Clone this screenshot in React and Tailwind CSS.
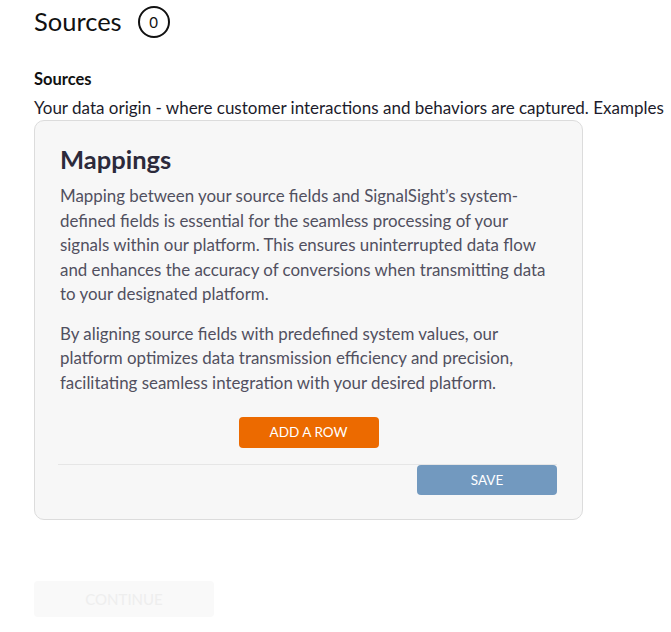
export default function App() {
  const para1 = [
    "Mapping between your source fields and SignalSight’s system-",
    "defined fields is essential for the seamless processing of your",
    "signals within our platform. This ensures uninterrupted data flow",
    "and enhances the accuracy of conversions when transmitting data",
    "to your designated platform.",
  ];
  const para2 = [
    "By aligning source fields with predefined system values, our",
    "platform optimizes data transmission efficiency and precision,",
    "facilitating seamless integration with your desired platform.",
  ];

  return (
    <div className="min-h-screen bg-white overflow-hidden font-['Lato','Noto_Sans',sans-serif] text-[#1c1b2b]">
      <div className="pl-[34px] pt-[6px]">
        {/* ── Header ── */}
        <div className="flex items-center gap-4 h-[32px]">
          <h1 className="text-[25.5px] leading-none text-[#111]">Sources</h1>
          <span className="w-[32px] h-[32px] rounded-full border-2 border-[#111] flex items-center justify-center text-[15px] text-[#111]">
            0
          </span>
        </div>

        <h2 className="mt-[31px] text-[16.5px] font-bold leading-5 text-[#111]">Sources</h2>
        <p className="mt-[9px] text-[17px] leading-5 whitespace-nowrap text-[#1c1b2b]">
          Your data origin - where customer interactions and behaviors are captured. Examples
        </p>

        {/* ── Mappings card ── */}
        <div className="mt-[2px] w-[549px] h-[400px] rounded-[10px] border border-[#dcdcdc] bg-[#f7f7f7] px-[25px] pt-[24px] flex flex-col">
          <h3 className="text-[25.5px] font-bold leading-7 text-[#2c2a3b]">Mappings</h3>
          <p className="mt-[11px] text-[16.9px] leading-[24.5px] text-[#51505f]">
            {para1.map((l) => (
              <span key={l} className="block whitespace-nowrap">{l}</span>
            ))}
          </p>
          <p className="mt-[15px] text-[16.9px] leading-[24.5px] text-[#51505f]">
            {para2.map((l) => (
              <span key={l} className="block whitespace-nowrap">{l}</span>
            ))}
          </p>

          <div className="flex justify-center mt-[22px]">
            <button className="w-[140px] h-[31px] rounded-[4px] bg-[#ec6a00] text-white text-[13.5px]">
              ADD A ROW
            </button>
          </div>

          <div className="mt-[16px] -ml-[2px] border-t border-[#e6e6e6] flex justify-end">
            <button className="w-[140px] h-[30px] rounded-[4px] bg-[#7299bf] text-white text-[13.5px]">
              SAVE
            </button>
          </div>
        </div>

        {/* ── Continue ── */}
        <button className="mt-[61px] w-[180px] h-[36px] rounded-[4px] bg-[#f9f9f9] text-[#eeeeee] text-[15px]">
          CONTINUE
        </button>
      </div>
    </div>
  );
}
